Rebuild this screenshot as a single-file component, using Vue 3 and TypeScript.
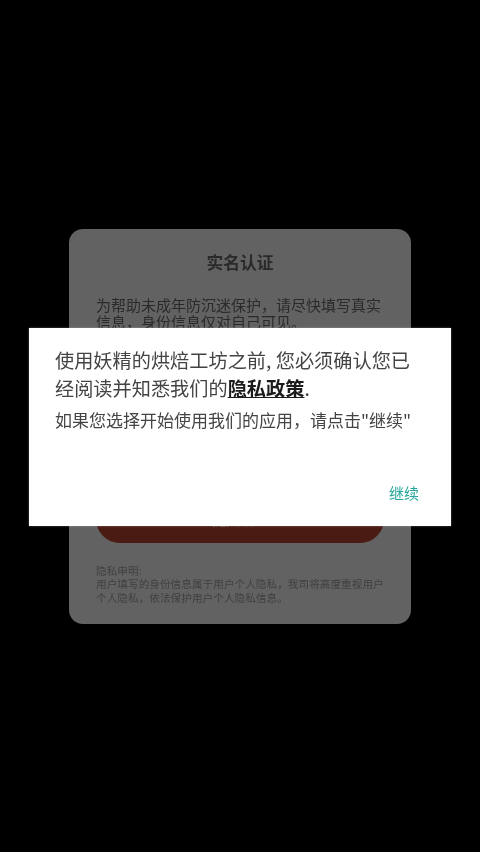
<script setup lang="ts">
const notice = '为帮助未成年防沉迷保护，请尽快填写真实信息，身份信息仅对自己可见。'
const privacy = '用户填写的身份信息属于用户个人隐私，我司将高度重视用户个人隐私，依法保护用户个人隐私信息。'
</script>

<template>
  <main class="screen">
    <section class="card">
      <h1 class="card-title">实名认证</h1>
      <p class="notice">{{ notice }}</p>
      <div class="fields"></div>
      <button class="submit" type="button">提交认证</button>
      <div class="privacy">
        <div>隐私申明:</div>
        <div>{{ privacy }}</div>
      </div>
    </section>

    <section class="dialog">
      <p class="dialog-title">使用妖精的烘焙工坊之前, 您必须确认您已经阅读并知悉我们的<strong class="policy">隐私政策</strong>.</p>
      <p class="dialog-text">如果您选择开始使用我们的应用，请点击"继续"</p>
      <div class="actions"><button class="continue" type="button">继续</button></div>
    </section>
  </main>
</template>

<style scoped>
.screen {
  position: relative;
  width: 480px;
  height: 852px;
  display: flex;
  align-items: center;
  justify-content: center;
  background: #000;
  overflow: hidden;
  font-family: "Noto Sans CJK SC", "Noto Sans", sans-serif;
}

.card {
  box-sizing: border-box;
  width: 342px;
  height: 395px;
  padding: 21px 27px 0;
  border-radius: 14px;
  background: #626262;
  color: #2a2a2a;
  filter: blur(0.7px);
}

.card-title {
  margin: 0;
  font-size: 16.8px;
  line-height: 24px;
  font-weight: 700;
  text-align: center;
}

.notice {
  margin: 22px 0 0;
  font-size: 15px;
  line-height: 17px;
}

.fields {
  height: 158px;
}

.submit {
  display: block;
  width: 288px;
  height: 48px;
  margin-top: 7px;
  border: 0;
  border-radius: 24px;
  background: #4a1b13;
  color: #6a4a44;
  font-family: inherit;
  font-size: 14px;
}

.privacy {
  margin-top: 21px;
  font-size: 10.66px;
  line-height: 13.5px;
  color: #404040;
}

.dialog {
  position: absolute;
  left: 29px;
  top: 328px;
  box-sizing: border-box;
  width: 422px;
  height: 198px;
  padding: 18px 26px 0;
  background: #fff;
  color: #444;
  box-shadow: 0 0 2px rgba(255, 255, 255, 0.35);
}

.dialog-title {
  margin: 0;
  font-size: 19.2px;
  line-height: 28px;
  filter: blur(0.7px);
}

.policy {
  color: #1c1c1c;
  font-weight: 700;
  text-decoration: underline;
  text-decoration-thickness: 1px;
  text-underline-offset: 1px;
}

.dialog-text {
  margin: 6px 0 0;
  font-size: 17px;
  line-height: 24px;
  filter: blur(0.7px);
}

.actions {
  display: flex;
  justify-content: flex-end;
  margin-top: 50px;
  margin-right: 6px;
}

.continue {
  padding: 0;
  border: 0;
  background: none;
  color: #26a69a;
  font-family: inherit;
  font-size: 15px;
  line-height: 22px;
  filter: blur(0.7px);
}
</style>
